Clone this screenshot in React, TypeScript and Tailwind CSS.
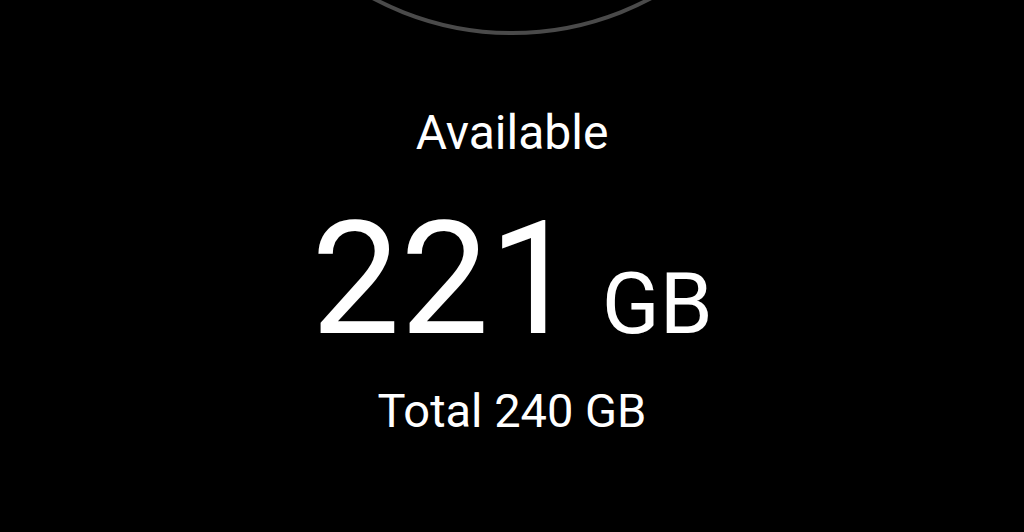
import React from "react";

const StorageRing = () => (
  <svg width="1024" height="40" viewBox="0 0 1024 40" className="block">
    <circle cx="512" cy="-262" r="295" fill="none" stroke="#4a4a4a" strokeWidth="4" />
  </svg>
);

export default function App() {
  return (
    <div
      className="flex h-[532px] w-[1024px] flex-col items-center overflow-hidden bg-black text-white"
      style={{ fontFamily: "Roboto, 'Noto Sans', sans-serif" }}
    >
      <StorageRing />
      <div className="mt-[69px] text-[48px] leading-none">Available</div>
      <div className="mt-[43px] flex items-baseline gap-[24px] leading-none">
        <span className="text-[158px] leading-none">221</span>
        <span className="text-[85px] leading-none">GB</span>
      </div>
      <div className="mt-[29px] text-[47px] leading-none">Total 240 GB</div>
    </div>
  );
}
